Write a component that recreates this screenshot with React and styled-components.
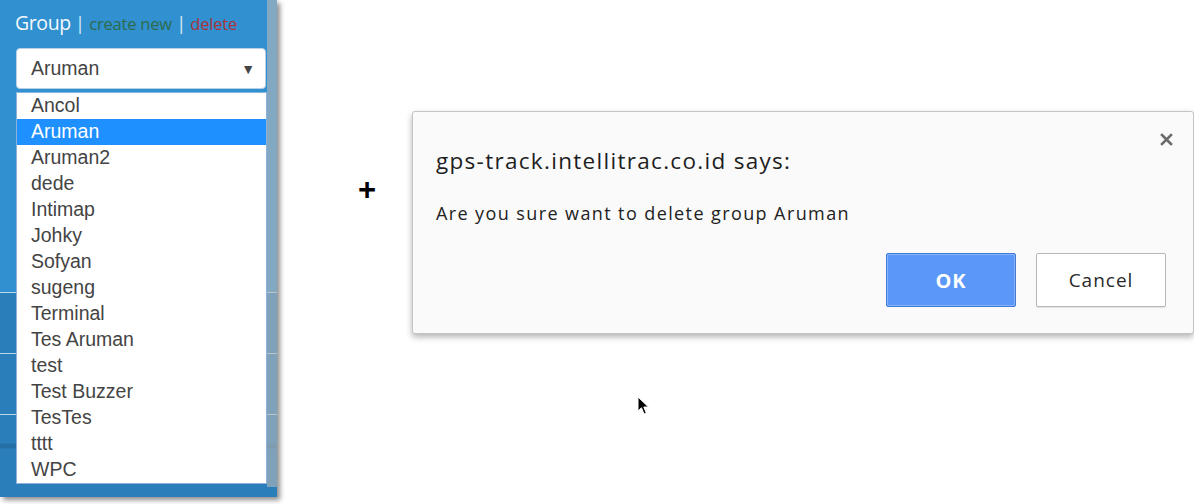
import styled, { createGlobalStyle } from "styled-components";

const GlobalStyle = createGlobalStyle`
    body {
        margin: 0;
        background: #ffffff;
        font-family: "Liberation Sans", Arial, sans-serif;
    }
`;

const groups = [
    "Ancol", "Aruman", "Aruman2", "dede", "Intimap", "Johky", "Sofyan", "sugeng",
    "Terminal", "Tes Aruman", "test", "Test Buzzer", "TesTes", "tttt", "WPC",
];

const App = () => {
    return (
        <>
            <GlobalStyle />
            <Page>
                <Panel>
                    <Top>
                        <Header>
                            <Title>Group</Title>
                            <Sep>|</Sep>
                            <Action $color="#2d6b4c">create new</Action>
                            <Sep>|</Sep>
                            <Action $color="#a8343c">delete</Action>
                        </Header>
                        <Select>
                            <span>Aruman</span>
                            <Arrow>▼</Arrow>
                        </Select>
                    </Top>
                    <BgRows>
                        <BgRow />
                        <BgRow />
                        <BgRow $dark />
                    </BgRows>
                    <Scroll />
                    <Dropdown>
                        {groups.map((g) => (
                            <Option key={g} $active={g === "Aruman"}>{g}</Option>
                        ))}
                    </Dropdown>
                </Panel>

                <Middle>
                    <Plus>+</Plus>
                </Middle>

                <Dialog>
                    <DialogHead>
                        <DialogTitle>gps-track.intellitrac.co.id says:</DialogTitle>
                        <Close>
                            <svg width="13" height="13" viewBox="0 0 13 13">
                                <path d="M2 2 L11 11 M11 2 L2 11" stroke="#6b6b6b" strokeWidth="2.6" strokeLinecap="square" />
                            </svg>
                        </Close>
                    </DialogHead>
                    <Message>Are you sure want to delete group Aruman</Message>
                    <Buttons>
                        <Button $primary>OK</Button>
                        <Button>Cancel</Button>
                    </Buttons>
                </Dialog>

                <Cursor width="13" height="20" viewBox="0 0 13 20">
                    <path d="M1 1 L1 15 L4.5 11.8 L7 18 L9.3 17 L6.8 11 L11.5 11 Z" fill="#000" stroke="#fff" strokeWidth="1" />
                </Cursor>
            </Page>
        </>
    );
};

const Page = styled.div`
    position: relative;
    display: flex;
    align-items: flex-start;
    width: 1194px;
    height: 504px;
    overflow: hidden;
`;

const Panel = styled.div`
    position: relative;
    flex: none;
    width: 277px;
    height: 497px;
    background: #2a7fbb;
    box-shadow: 3px 3px 5px rgba(0, 0, 0, 0.45);
    display: flex;
    flex-direction: column;
`;

const Top = styled.div`
    height: 293px;
    box-sizing: border-box;
    background: #3190d0;
    border-bottom: 1.5px solid #bcd6ea;
`;

const Header = styled.div`
    display: flex;
    align-items: baseline;
    gap: 4px;
    padding: 9px 0 0 15px;
    height: 48px;
    box-sizing: border-box;
`;

const Title = styled.span`
    font-family: "Open Sans", sans-serif;
    font-size: 19.5px;
    color: #f4f8fb;
    letter-spacing: -0.4px;
`;

const Sep = styled.span`
    font-family: "Open Sans", sans-serif;
    font-size: 19px;
    color: #d6e8f4;
`;

const Action = styled.span`
    font-family: "Open Sans", sans-serif;
    font-size: 16.5px;
    color: ${(p) => p.$color};
    letter-spacing: -0.2px;
`;

const Select = styled.div`
    display: flex;
    align-items: center;
    justify-content: space-between;
    margin-left: 16px;
    width: 250px;
    height: 41px;
    box-sizing: border-box;
    padding: 0 10px 0 14px;
    background: #ffffff;
    border: 1px solid #b9cfe6;
    border-radius: 4px;
    font-size: 19.5px;
    color: #444444;
`;

const Arrow = styled.span`
    font-size: 14px;
    color: #454545;
`;

const BgRows = styled.div`
    display: flex;
    flex-direction: column;
`;

const BgRow = styled.div`
    height: 60px;
    border-bottom: ${(p) => (p.$dark ? "none" : "1.5px solid #bcd6ea")};
    background: ${(p) => (p.$dark ? "linear-gradient(#2a7fbb 0, #2a7fbb 28px, #266fa4 29px, #266fa4 33px, #2a7fbb 34px)" : "#2a7fbb")};
`;

const Scroll = styled.div`
    position: absolute;
    top: 0;
    right: 0;
    width: 10px;
    height: 487px;
    background: rgba(185, 185, 185, 0.6);
`;

const Dropdown = styled.ul`
    position: absolute;
    top: 92px;
    left: 16px;
    width: 251px;
    height: 392px;
    box-sizing: border-box;
    margin: 0;
    padding: 0;
    list-style: none;
    background: #ffffff;
    border: 1px solid #8db2de;
`;

const Option = styled.li`
    height: 26px;
    line-height: 25px;
    padding-left: 14px;
    font-size: 19.5px;
    color: ${(p) => (p.$active ? "#ffffff" : "#444444")};
    background: ${(p) => (p.$active ? "#1e90ff" : "transparent")};
`;

const Middle = styled.div`
    flex: none;
    width: 135px;
    display: flex;
    padding-top: 172px;
    padding-left: 81px;
    box-sizing: border-box;
`;

const Plus = styled.span`
    font-family: "Liberation Sans", sans-serif;
    font-weight: 700;
    font-size: 31px;
    line-height: 36px;
    color: #000000;
`;

const Dialog = styled.div`
    flex: none;
    margin-top: 111px;
    width: 782px;
    height: 223px;
    box-sizing: border-box;
    background: #fafafa;
    border: 1px solid #c4c4c4;
    border-radius: 3px;
    box-shadow: 0 3px 6px rgba(0, 0, 0, 0.3);
    padding: 20px 20px 0 23px;
    font-family: "Open Sans", sans-serif;
    display: flex;
    flex-direction: column;
`;

const DialogHead = styled.div`
    display: flex;
    justify-content: space-between;
    align-items: flex-start;
`;

const DialogTitle = styled.div`
    margin-top: 14px;
    font-size: 22.5px;
    line-height: 30px;
    letter-spacing: 1.3px;
    color: #1e1e1e;
`;

const Close = styled.div`
    margin-top: 1px;
    line-height: 0;
`;

const Message = styled.div`
    margin-top: 25px;
    font-size: 18px;
    line-height: 25px;
    letter-spacing: 1.4px;
    color: #222222;
`;

const Buttons = styled.div`
    display: flex;
    justify-content: flex-end;
    gap: 20px;
    margin-top: 27px;
    margin-right: 7px;
`;

const Button = styled.div`
    width: 130px;
    height: 54px;
    box-sizing: border-box;
    display: flex;
    align-items: center;
    justify-content: center;
    border-radius: 2px;
    font-size: ${(p) => (p.$primary ? "20px" : "19px")};
    letter-spacing: 1px;
    font-weight: ${(p) => (p.$primary ? 700 : 400)};
    color: ${(p) => (p.$primary ? "#ffffff" : "#2a2a2a")};
    background: ${(p) => (p.$primary ? "#5a97f6" : "#ffffff")};
    border: 1px solid ${(p) => (p.$primary ? "#3f7ad9" : "#b8b8b8")};
    box-shadow: ${(p) => (p.$primary ? "inset 0 0 0 1px #8ab4f8" : "0 1px 1px rgba(0,0,0,0.1)")};
`;

const Cursor = styled.svg`
    position: absolute;
    left: 637px;
    top: 396px;
`;

export default App;
